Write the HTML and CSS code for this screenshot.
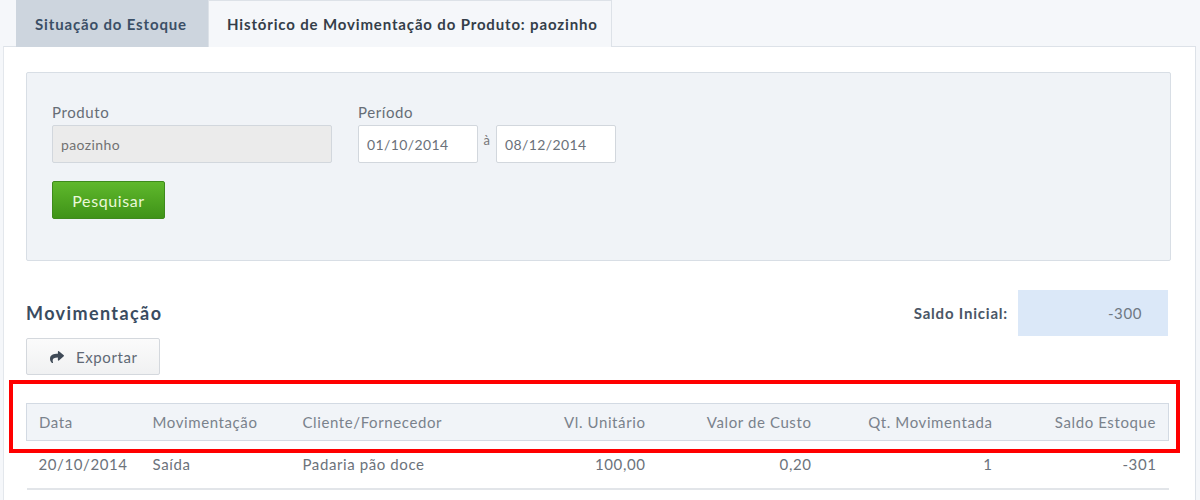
FILE: index.html
```html
<!DOCTYPE html>
<html lang="pt-BR">
<head>
<meta charset="utf-8">
<title>Histórico de Movimentação</title>
<link rel="stylesheet" href="styles.css">
</head>
<body>
<div class="page">
  <nav class="tabs">
    <div class="tab tab-inactive">Situação do Estoque</div>
    <div class="tab tab-active">Histórico de Movimentação do Produto: paozinho</div>
  </nav>
  <main class="panel">
    <section class="filter">
      <div class="filter-row">
        <div class="field field-produto">
          <label class="label">Produto</label>
          <div class="input input-disabled">paozinho</div>
        </div>
        <div class="field">
          <label class="label">Período</label>
          <div class="period">
            <div class="input input-date">01/10/2014</div>
            <span class="sep">à</span>
            <div class="input input-date">08/12/2014</div>
          </div>
        </div>
      </div>
      <button class="btn-green">Pesquisar</button>
    </section>

    <section class="mov">
      <div class="mov-head">
        <div class="mov-left">
          <h2 class="mov-title">Movimentação</h2>
          <button class="btn-export">
            <svg class="icon" width="14" height="12" viewBox="0 0 512 430" aria-hidden="true"><path fill="#3f4a57" d="M503.7 150.6 327.7 2.6C312.3-10.7 288 .1 288 20.7v79.9C127.4 102.4 0 134.6 0 286.9c0 61.5 39.6 122.4 83.4 154.2 13.7 9.9 33.1-2.5 28.1-18.6C66 277.7 133.1 238.9 288 236.6v87.7c0 20.7 24.3 31.4 39.7 18.2l176-152c11.1-9.6 11.1-26.8 0-36.3z"/></svg>
            Exportar
          </button>
        </div>
        <div class="saldo">
          <span class="saldo-label">Saldo Inicial:</span>
          <span class="saldo-value">-300</span>
        </div>
      </div>

      <div class="table-wrap">
        <table class="grid">
          <colgroup>
            <col class="c-data"><col class="c-mov"><col class="c-cli"><col class="c-vl"><col class="c-custo"><col class="c-qt"><col class="c-saldo">
          </colgroup>
          <thead>
            <tr>
              <th>Data</th>
              <th>Movimentação</th>
              <th>Cliente/Fornecedor</th>
              <th class="r">Vl. Unitário</th>
              <th class="r">Valor de Custo</th>
              <th class="r">Qt. Movimentada</th>
              <th class="r">Saldo Estoque</th>
            </tr>
          </thead>
          <tbody>
            <tr>
              <td>20/10/2014</td>
              <td>Saída</td>
              <td>Padaria pão doce</td>
              <td class="r">100,00</td>
              <td class="r">0,20</td>
              <td class="r">1</td>
              <td class="r">-301</td>
            </tr>
          </tbody>
        </table>
        <div class="highlight"></div>
      </div>
    </section>
  </main>
</div>
</body>
</html>
```

FILE: styles.css
```css
* { box-sizing: border-box; }
html, body { margin: 0; padding: 0; }
body {
  background: #f5f7fa;
  font-family: Lato, "Open Sans", "Liberation Sans", sans-serif;
  font-size: 15px;
  letter-spacing: 0.6px;
  color: #6f7680;
  width: 1200px;
  height: 500px;
  overflow: hidden;
}
.page { padding: 0 4px 0 0; }

.tabs {
  display: flex;
  padding-left: 16px;
  height: 46px;
}
.tab {
  display: flex;
  align-items: center;
  padding: 0 8px 0 18px;
  font-weight: 700;
  font-size: 15px;
  letter-spacing: 0.85px;
  height: 47px;
  white-space: nowrap;
}
.tab-inactive {
  width: 192px;
  background: #cdd5de;
  color: #3b4f66;
  padding-left: 19px;
}
.tab-active {
  width: 404px;
  background: #f5f7fa;
  color: #343e49;
  border: 1px solid #dde2e8;
  border-bottom: none;
  position: relative;
  z-index: 1;
}

.panel {
  background: #fff;
  border-top: 1px solid #dde2e8;
  border-left: 1px solid #e3e7ec;
  border-right: 1px solid #dde2e8;
  margin-left: 3px;
  height: 454px;
  padding: 25px 27px 0 22px;
}

.filter {
  background: #f0f3f7;
  border: 1px solid #d8dee5;
  border-radius: 2px;
  height: 189px;
  margin-right: -3px;
  padding: 29px 25px 0 25px;
}
.filter-row { display: flex; gap: 26px; }
.field { display: flex; flex-direction: column; }
.label {
  font-size: 15px;
  color: #666d76;
  line-height: 20px;
  margin-bottom: 3px;
}
.input {
  height: 38px;
  border: 1px solid #d2d7dd;
  border-radius: 2px;
  background: #fff;
  display: flex;
  align-items: center;
  padding: 0 8px;
  font-size: 14px;
  letter-spacing: 0.4px;
  color: #6a717a;
}
.input-disabled { width: 280px; background: #ebebeb; color: #727272; }
.period { display: flex; align-items: flex-start; }
.input-date { width: 120px; }
.sep { width: 18px; text-align: center; padding-top: 7px; font-size: 13px; color: #777; }

.btn-green {
  margin-top: 18px;
  width: 113px;
  height: 38px;
  border: 1px solid #3e8a1c;
  border-radius: 2px;
  background: linear-gradient(#5fb82c, #3f9318);
  color: #eaf8d8;
  font-family: inherit;
  font-size: 16px;
  letter-spacing: 0.6px;
  display: block;
}

.mov-head {
  display: flex;
  justify-content: space-between;
  align-items: flex-start;
  padding-top: 29px;
}
.mov-left { display: flex; flex-direction: column; }
.mov-title {
  margin: 0;
  font-size: 18px;
  font-weight: 700;
  color: #3a4c60;
  line-height: 22px;
  padding-top: 12px;
  letter-spacing: 1.4px;
}
.btn-export {
  margin-top: 14px;
  width: 134px;
  height: 37px;
  border: 1px solid #d4d8dd;
  border-radius: 2px;
  background: linear-gradient(#fbfbfb, #f0f1f2);
  color: #5f6975;
  font-family: inherit;
  font-size: 15px;
  letter-spacing: 0.6px;
  display: flex;
  align-items: center;
  padding: 0 0 0 23px;
  gap: 12px;
}
.icon { display: block; }

.saldo { display: flex; align-items: center; }
.saldo-label {
  font-weight: 700;
  color: #4a5666;
  font-size: 15px;
  letter-spacing: 0.8px;
  margin-right: 10px;
}
.saldo-value {
  width: 150px;
  height: 46px;
  background: #dbe8f8;
  display: flex;
  align-items: center;
  justify-content: flex-end;
  padding-right: 26px;
  color: #6f7883;
  font-size: 15px;
}

.table-wrap { position: relative; margin-top: 28px; }
.grid {
  width: 1142px;
  border-collapse: collapse;
  table-layout: fixed;
}
.c-data { width: 114px; }
.c-mov { width: 150px; }
.c-cli { width: 239px; }
.c-vl { width: 128px; }
.c-custo { width: 166px; }
.c-qt { width: 181px; }
.c-saldo { width: 164px; }
.grid th {
  height: 37px;
  background: #f1f4f8;
  border-top: 1px solid #d3dae3;
  border-bottom: 1px solid #d3dae3;
  font-weight: 400;
  color: #7a828c;
  text-align: left;
  padding: 0 12px;
  font-size: 15px;
}
.grid th:first-child { border-left: 1px solid #d3dae3; }
.grid th:last-child { border-right: 1px solid #d3dae3; }
.grid td {
  height: 48px;
  padding: 0 12px;
  color: #6c737b;
  border-bottom: 2px solid #e2e5e9;
  font-size: 15px;
}
.grid .r { text-align: right; }

.highlight {
  position: absolute;
  left: -17px;
  top: -23px;
  width: 1171px;
  height: 73px;
  border: 4px solid #ff0000;
  pointer-events: none;
}
```
